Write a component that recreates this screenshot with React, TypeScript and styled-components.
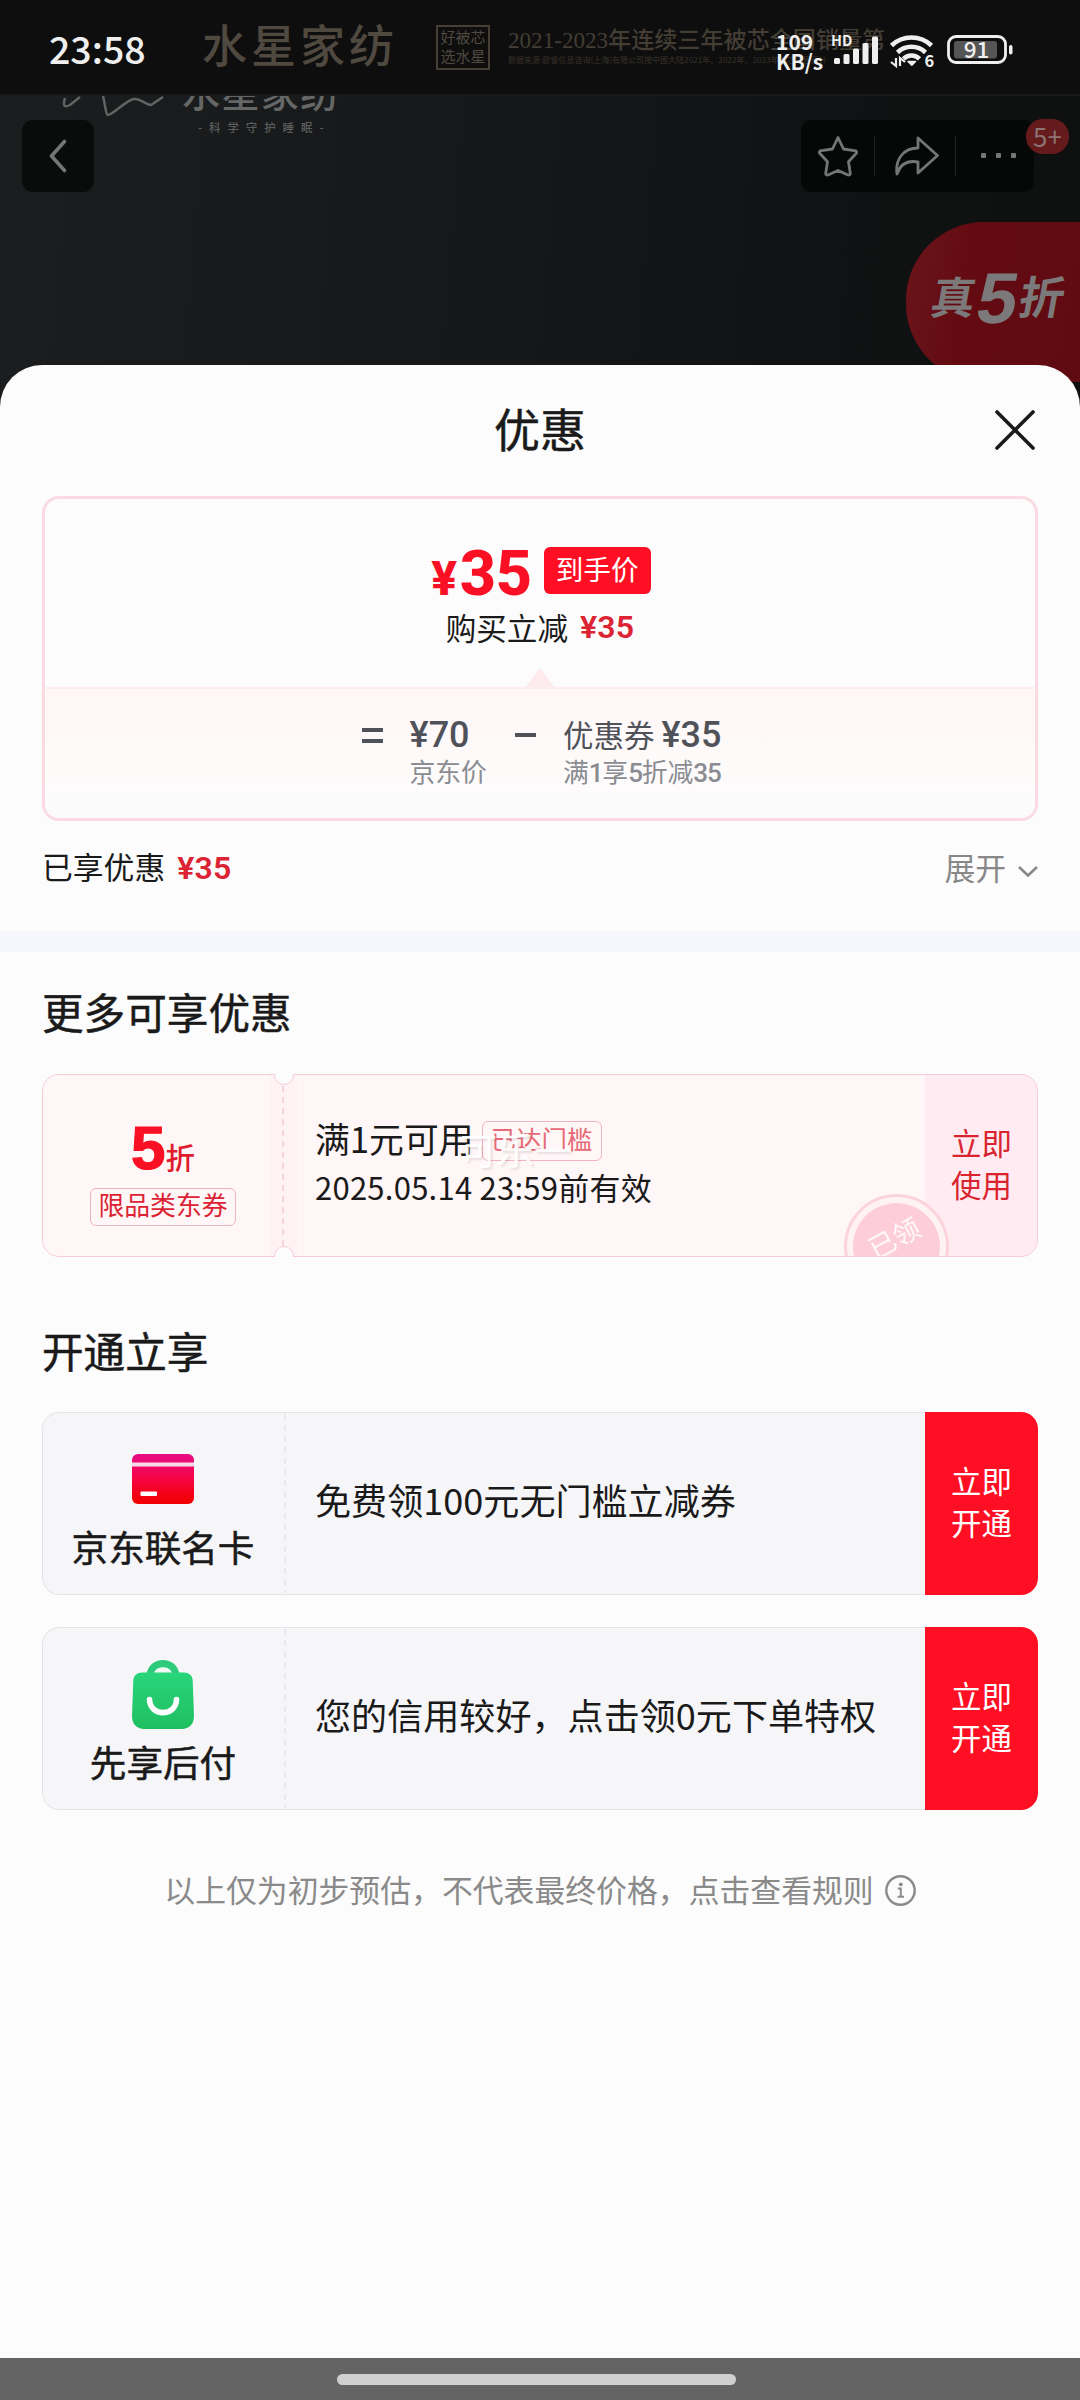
import React from "react";
import styled, { createGlobalStyle } from "styled-components";

const cjk = '"Noto Sans CJK SC", sans-serif';
const latin = 'Roboto, "Noto Sans CJK SC", sans-serif';

const GlobalStyle = createGlobalStyle`
  * { box-sizing: border-box; }
  body { margin: 0; background: #646464; font-family: ${cjk}; }
  svg { display: block; flex: none; }
`;

const Screen = styled.div`
  width: 1080px;
  height: 2400px;
  display: flex;
  flex-direction: column;
  overflow: hidden;
  white-space: nowrap;
`;

/* ---------- status bar ---------- */

const StatusBar = styled.div`
  position: relative;
  flex: none;
  height: 94px;
  background: #0e0e0e;
`;

const ShopBanner = styled.div`
  height: 94px;
  padding-left: 202px;
  display: flex;
  align-items: flex-start;
  color: #504940;
`;

const BannerName = styled.div`
  width: 234px;
  margin-top: 13px;
  font-size: 45px;
  line-height: 62px;
  font-weight: 500;
  letter-spacing: 4px;
`;

const BannerSeal = styled.div`
  width: 54px;
  height: 45px;
  margin: 25px 18px 0 0;
  border: 2px solid #453f36;
  font-size: 15px;
  line-height: 19px;
  text-align: center;
`;

const BannerClaim = styled.div`
  margin-top: 26px;
  color: #433d34;
  font-size: 23.1px;
  line-height: 28px;
  font-weight: 500;
  font-family: "Liberation Serif", ${cjk};
`;

const BannerSource = styled.div`
  color: #302c26;
  font-size: 8px;
  line-height: 12px;
  font-family: ${cjk};
`;

const SystemLayer = styled.div`
  position: absolute;
  inset: 0;
  display: flex;
  align-items: flex-start;
  color: #efefef;
`;

const Clock = styled.div`
  width: 728px;
  padding-left: 49px;
  margin-top: 21px;
  font-size: 37.5px;
  line-height: 54px;
  font-weight: 500;
`;

const NetSpeed = styled.div`
  width: 55px;
  margin: 31px 0 0 48px;
  font-size: 21px;
  line-height: 20px;
  font-weight: 700;
`;

const SystemIcons = styled.svg`
  width: 190px;
  height: 44px;
  margin-top: 30px;
  font-family: ${cjk};
`;

/* ---------- dimmed product page ---------- */

const Hero = styled.div`
  position: relative;
  flex: none;
  height: 315px;
  overflow: hidden;
  background: linear-gradient(95deg, #1b1d1e 0%, #161819 40%, #101213 75%, #0e1010 100%);
  border-top: 2px solid #191b1b;
`;

const HeroBrand = styled.div`
  position: absolute;
  left: 182px;
  top: -31px;
  color: #656666;
  font-size: 38px;
  line-height: 52px;
  font-weight: 500;
  letter-spacing: 1.4px;
`;

const HeroTagline = styled.div`
  position: absolute;
  left: 198px;
  top: 22px;
  color: #5c5d5d;
  font-size: 11.5px;
  line-height: 18px;
  font-weight: 500;
  letter-spacing: 6.9px;
`;

const HeroMark = styled.svg`
  position: absolute;
  left: 60px;
  top: -2px;
`;

const NavRow = styled.div`
  display: flex;
  justify-content: space-between;
  padding: 24px 46px 0 22px;
`;

const NavButton = styled.div`
  width: 72px;
  height: 72px;
  border-radius: 11px;
  background: #0a0b0b;
  display: flex;
  align-items: center;
  justify-content: center;
`;

const NavGroup = styled.div`
  position: relative;
  width: 233px;
  height: 72px;
  border-radius: 11px;
  background: #060707;
  display: flex;
  align-items: center;
`;

const NavCell = styled.div<{ $w: number; $line?: boolean; $shift?: number }>`
  width: ${(p) => p.$w}px;
  height: 40px;
  padding-left: ${(p) => p.$shift ?? 0}px;
  display: flex;
  align-items: center;
  justify-content: center;
  border-right: ${(p) => (p.$line ? "1px solid #222424" : "0")};
`;

const CountBadge = styled.div`
  position: absolute;
  left: 225px;
  top: -1px;
  width: 43px;
  height: 35px;
  border-radius: 17px;
  background: #651a1b;
  color: #8c7474;
  font-size: 26px;
  line-height: 33px;
  text-align: center;
`;

const DiscountPill = styled.div`
  position: absolute;
  left: 906px;
  top: 126px;
  width: 174px;
  height: 160px;
  border-radius: 78px 0 0 78px;
  background: linear-gradient(100deg, #6a151b 0%, #640b12 35%, #600a11 100%);
  color: #7c797a;
  display: flex;
  align-items: center;
  gap: 2px;
  padding: 0 0 8px 26px;
  font-weight: 900;
`;

const PillText = styled.span<{ $size: number }>`
  font-family: ${(p) => (p.$size > 50 ? '"Liberation Sans", sans-serif' : cjk)};
  font-size: ${(p) => p.$size}px;
  line-height: 80px;
  font-weight: ${(p) => (p.$size > 50 ? 900 : 700)};
  transform: skewX(-10deg);
  margin-top: ${(p) => (p.$size > 50 ? -1 : -6)}px;
`;

/* ---------- sheet ---------- */

const Sheet = styled.div`
  position: relative;
  flex: none;
  height: 1993px;
  margin-top: -44px;
  border-radius: 42px 42px 0 0;
  background: #fcfcfc;
  color: #1a1a1a;
  display: flex;
  flex-direction: column;
`;

const SheetHeader = styled.div`
  height: 124px;
  margin-bottom: 7px;
  padding: 0 42px;
  display: grid;
  grid-template-columns: 1fr auto 1fr;
  align-items: center;
`;

const SheetTitle = styled.div`
  grid-column: 2;
  font-size: 46px;
  line-height: 64px;
  -webkit-text-stroke: 0.5px #1a1a1a;
`;

const CloseIcon = styled.svg`
  justify-self: end;
  margin-top: 7px;
`;

const PriceCard = styled.div`
  height: 325px;
  margin: 0 42px;
  border: 3px solid #fbdae2;
  border-radius: 17px;
  overflow: hidden;
`;

const FinalPrice = styled.div`
  position: relative;
  height: 188px;
  padding-top: 48px;
`;

const PriceRow = styled.div`
  display: flex;
  justify-content: center;
  gap: 12px;
  height: 47px;
  margin-bottom: 15px;
  padding-left: 2px;
`;

const BigPrice = styled.div`
  color: #fa1024;
  font-family: ${latin};
  font-size: 63px;
  line-height: 54px;
  font-weight: 800;
  letter-spacing: -0.4px;
`;

const Yen = styled.span`
  font-size: 48px;
  margin-right: 3px;
`;

const FinalTag = styled.div`
  width: 107px;
  height: 47px;
  border-radius: 6px;
  background: #ff0f23;
  color: #fff;
  font-size: 27.6px;
  line-height: 43px;
  text-align: center;
`;

const SavingRow = styled.div`
  display: flex;
  justify-content: center;
  font-size: 30.6px;
  line-height: 37px;
`;

const RedAmount = styled.span`
  margin-left: 12px;
  color: #dc2333;
  font-family: ${latin};
  font-size: 32px;
  font-weight: 600;
  letter-spacing: 0.2px;
`;

const Pointer = styled.svg`
  position: absolute;
  left: 481px;
  bottom: 0;
`;

const Formula = styled.div`
  height: 131px;
  padding: 24px 0 0 3px;
  border-top: 2px solid #fdedf0;
  background: linear-gradient(#fff6f7 0%, #fefafa 50%, #fcfcfc 100%);
  display: flex;
  justify-content: center;
  color: #50525a;
`;

const Sign = styled.div<{ $lead?: boolean }>`
  width: 21px;
  height: 44px;
  margin: 0 27px 0 ${(p) => (p.$lead ? 0 : 28)}px;
  display: flex;
  flex-direction: column;
  justify-content: center;
  gap: 7px;
`;

const SignBar = styled.div`
  height: 4px;
  background: #50525a;
`;

const Term = styled.div`
  display: flex;
  flex-direction: column;
`;

const TermValue = styled.div`
  height: 44px;
  display: flex;
  align-items: baseline;
  font-size: 30.5px;
  line-height: 40px;
`;

const TermAmount = styled.span<{ $gap?: number }>`
  margin-left: ${(p) => p.$gap ?? 0}px;
  font-family: ${latin};
  font-size: 36px;
  line-height: 44px;
  font-weight: 500;
`;

const TermNote = styled.div`
  height: 34px;
  color: #8a8c92;
  font-size: 25.8px;
  line-height: 28px;
`;

const NoteNumber = styled.span`
  font-family: ${latin};
  font-size: 26px;
  font-weight: 500;
  letter-spacing: -1.2px;
`;

const SavedRow = styled.div`
  height: 50px;
  margin: 21px 42px 39px;
  display: flex;
  align-items: center;
  justify-content: space-between;
  font-size: 30.8px;
  line-height: 50px;
`;

const Expand = styled.div`
  display: flex;
  align-items: center;
  gap: 12px;
  color: #888;
`;

const Chevron = styled.svg`
  margin-top: 9px;
`;

const Band = styled.div`
  height: 21px;
  background: #f6f7fd;
`;

const SectionTitle = styled.div<{ $top: number; $bottom: number }>`
  margin: ${(p) => p.$top}px 42px ${(p) => p.$bottom}px;
  font-size: 41.6px;
  line-height: 60px;
  -webkit-text-stroke: 0.5px #1a1a1a;
`;

const Ticket = styled.div<{ $pink?: boolean }>`
  position: relative;
  flex: none;
  height: 183px;
  margin: 0 42px ${(p) => (p.$pink ? 0 : 32)}px;
  border-radius: 17px;
  overflow: hidden;
  background: ${(p) => (p.$pink ? "#fff6f7" : "#f6f6f9")};
  display: grid;
  grid-template-columns: 242px 1fr 113px;
`;

const TicketOutline = styled.div<{ $color: string; $right?: number }>`
  position: absolute;
  inset: 0 ${(p) => p.$right ?? 0}px 0 0;
  border: 1.5px solid ${(p) => p.$color};
  border-right-width: ${(p) => (p.$right ? 0 : 1.5)}px;
  border-radius: ${(p) => (p.$right ? "17px 0 0 17px" : "17px")};
`;

const Seam = styled.div`
  position: absolute;
  left: 227px;
  top: 1px;
  bottom: 1px;
  width: 28px;
  background: #fff2f4;
  display: flex;
  justify-content: center;
`;

const Dash = styled.div<{ $color: string }>`
  width: 1.5px;
  height: 100%;
  background: repeating-linear-gradient(${(p) => p.$color} 0 6px, transparent 6px 11px);
`;

const PlainSeam = styled.div`
  position: absolute;
  left: 242px;
  top: 2px;
  bottom: 2px;
`;

const Notch = styled.div<{ $bottom?: boolean }>`
  position: absolute;
  left: 232px;
  ${(p) => (p.$bottom ? "bottom" : "top")}: -9px;
  width: 20px;
  height: 20px;
  border-radius: 50%;
  border: 1.5px solid #f5ccd6;
  background: #fcfcfc;
`;

const Stub = styled.div<{ $top: number }>`
  display: flex;
  flex-direction: column;
  align-items: center;
  padding-top: ${(p) => p.$top}px;
`;

const Discount = styled.div`
  height: 60px;
  margin-bottom: 10px;
  color: #fa1024;
  font-family: "Liberation Sans", sans-serif;
  font-size: 62px;
  line-height: 60px;
  font-weight: 700;
  -webkit-text-stroke: 1.2px #fa1024;
`;

const DiscountUnit = styled.span`
  font-family: ${cjk};
  font-size: 29.5px;
  line-height: 1;
  font-weight: 500;
  color: #e01c2e;
  -webkit-text-stroke: 0;
`;

const LimitTag = styled.div`
  width: 146px;
  height: 38px;
  border: 1.5px solid #f2b4c1;
  border-radius: 6px;
  color: #dc2333;
  font-size: 25.8px;
  line-height: 30px;
  text-align: center;
`;

const StubLabel = styled.div`
  position: absolute;
  bottom: 20px;
  font-size: 36.6px;
  line-height: 56px;
  -webkit-text-stroke: 0.5px #1a1a1a;
`;

const TicketBody = styled.div`
  display: flex;
  flex-direction: column;
  justify-content: center;
  padding-left: 31px;
`;

const OfferText = styled.div`
  margin-top: -9px;
  font-size: 36.1px;
  line-height: 54px;
`;

const Condition = styled.div`
  display: flex;
  align-items: center;
  gap: 8px;
  height: 48px;
  margin-top: -2px;
  font-size: 34.8px;
  line-height: 40px;
`;

const ConditionText = styled.span`
  margin-top: -6px;
`;

const MetTag = styled.div`
  width: 120px;
  height: 40px;
  border: 1.5px solid #f2b4c1;
  border-radius: 6px;
  color: #e66a76;
  font-size: 25.4px;
  line-height: 33px;
  text-align: center;
`;

const Validity = styled.div`
  height: 48px;
  font-size: 31px;
  line-height: 44px;
  letter-spacing: 0.25px;
`;

const TicketAction = styled.div<{ $pink?: boolean }>`
  display: flex;
  align-items: center;
  justify-content: center;
  padding-bottom: 6px;
  background: ${(p) => (p.$pink ? "#ffebf1" : "#ff0f23")};
  color: ${(p) => (p.$pink ? "#d9242f" : "#fff")};
  font-size: 30.4px;
  line-height: 42px;
`;

const Stamp = styled.div`
  position: absolute;
  left: 802px;
  top: 120px;
  width: 105px;
  height: 105px;
  border-radius: 50%;
  border: 3px solid #fbd3dc;
  padding: 6px;
  background: #fff2f5;
`;

const StampFace = styled.div`
  width: 87px;
  height: 87px;
  border-radius: 50%;
  background: #fdcdd9;
  color: #fff8fa;
  font-size: 27px;
  line-height: 68px;
  text-align: center;
  padding-left: 4px;
  transform: rotate(-28deg);
`;

const UserMark = styled.div`
  position: absolute;
  left: 418px;
  top: 49px;
  color: rgba(255, 255, 255, 0.95);
  font-size: 37px;
  line-height: 52px;
  text-shadow: 2px 2px 2px rgba(120, 100, 110, 0.16);
`;

const Footnote = styled.div`
  display: flex;
  align-items: center;
  justify-content: center;
  gap: 11px;
  height: 44px;
  margin-top: 26px;
  color: #8a8a8a;
  font-size: 30.85px;
  line-height: 40px;
`;

const FootnoteText = styled.span`
  margin-top: -3px;
`;

const HomeBar = styled.div`
  flex: 1;
  background: #646464;
  display: flex;
  justify-content: center;
  align-items: flex-start;
  padding: 16px 7px 0 0;
`;

const HomePill = styled.div`
  width: 399px;
  height: 11px;
  border-radius: 6px;
  background: #d0d0d0;
`;

const bars = [
  [834, 58],
  [843.5, 54],
  [853, 48.5],
  [862.5, 43],
  [872, 36.5],
];

function StatusIcons() {
  return (
    <SystemIcons viewBox="831 30 190 44" fill="#efefef">
      <text x="831" y="46" fontSize="14.5" fontWeight="700">HD</text>
      {bars.map(([x, y]) => (
        <rect key={x} x={x} y={y} width="6" height={64 - y} rx="1.5" />
      ))}
      <g fill="none" stroke="#efefef" strokeWidth="4.6">
        <path d="M891.5 45.5a29 29 0 0 1 40 0" />
        <path d="M897.5 52.5a20 20 0 0 1 28 0" />
        <path d="M903.5 58.8a11.500 11.500 0 0 1 16 0" />
      </g>
      <path d="M908 61.500h7.500l-3.700 3.800z" stroke="#efefef" strokeWidth="1.500" strokeLinejoin="round" />
      <path d="M896 58v8l-5-4M900 66v-8l5 4" fill="none" stroke="#efefef" strokeWidth="2.200" />
      <text x="924.500" y="66.500" fontSize="16.5" fontWeight="700">6</text>
      <rect x="948.500" y="36.500" width="57" height="26" rx="7.500" fill="none" stroke="#efefef" strokeWidth="2.800" />
      <rect x="954" y="41" width="43" height="17.500" rx="3" fill="#555" />
      <rect x="1009" y="45" width="3.500" height="9.500" rx="1.700" />
      <text x="976.500" y="58" fontSize="22.5" fontWeight="500" textAnchor="middle">91</text>
    </SystemIcons>
  );
}

function CardIcon() {
  return (
    <svg width="62" height="50" viewBox="0 0 62 50">
      <defs>
        <linearGradient id="cardFill" x1="0" y1="0" x2="0" y2="1">
          <stop offset="0" stopColor="#e60c86" />
          <stop offset="0.45" stopColor="#f5054a" />
          <stop offset="0.85" stopColor="#f20010" />
          <stop offset="1" stopColor="#f20000" />
        </linearGradient>
      </defs>
      <rect width="62" height="50" rx="6" fill="url(#cardFill)" />
      <rect y="8.500" width="62" height="4" fill="#fbd9ea" />
      <rect x="8.500" y="37.500" width="16.500" height="4.500" rx="1" fill="#fff" />
    </svg>
  );
}

function BagIcon() {
  return (
    <svg width="62" height="69" viewBox="0 0 62 69">
      <defs>
        <linearGradient id="bagFill" x1="0" y1="0" x2="0" y2="1">
          <stop offset="0" stopColor="#29d67b" />
          <stop offset="1" stopColor="#1fbf60" />
        </linearGradient>
      </defs>
      <path d="M14.500 14C16 5.500 22.500 0 31 0S46 5.500 47.500 14Z" fill="#2fcb7c" />
      <path d="M10 12.500h42c5 0 8.500 3 8.700 8L62 56c0 8-5 13-12 13H12C5 69 0 64 0 56l1.300-35.500C1.500 15.500 5 12.500 10 12.500z" fill="url(#bagFill)" />
      <path d="M22 12.500C23.500 9 27 7.200 31 7.200s7.500 1.800 9 5.300z" fill="#f0faf4" />
      <path d="M17.500 39.500C18 57 44 57 44.500 39.500" fill="none" stroke="#fff" strokeWidth="5.600" strokeLinecap="round" />
    </svg>
  );
}

const offers = [
  { name: "京东联名卡", text: "免费领100元无门槛立减券", icon: <CardIcon />, top: 42 },
  { name: "先享后付", text: "您的信用较好，点击领0元下单特权", icon: <BagIcon />, top: 33 },
];

export default function App() {
  return (
    <Screen>
      <GlobalStyle />
      <StatusBar>
        <ShopBanner>
          <BannerName>水星家纺</BannerName>
          <BannerSeal>
            好被芯
            <br />
            选水星
          </BannerSeal>
          <BannerClaim>
            2021-2023年连续三年被芯全国销量第
            <BannerSource>数据来源:欧睿信息咨询(上海)有限公司按中国大陆2021年、2022年、2023年被芯零售额计</BannerSource>
          </BannerClaim>
        </ShopBanner>
        <SystemLayer>
          <Clock>23:58</Clock>
          <NetSpeed>
            109
            <br />
            KB/s
          </NetSpeed>
          <StatusIcons />
        </SystemLayer>
      </StatusBar>

      <Hero>
        <HeroMark width="110" height="24" viewBox="0 0 110 24" fill="none" stroke="#626464" strokeWidth="2.500">
          <path d="M5 4C2 14 6 13 10 11L20 3M43 2C45 10 46 21 48 21C54 20 66 6 74 5C80 4 86 11 91 11L103 3" />
        </HeroMark>
        <HeroBrand>水星家纺</HeroBrand>
        <HeroTagline>-科学守护睡眠-</HeroTagline>
        <NavRow>
          <NavButton>
            <svg width="18" height="34" viewBox="0 0 18 34" fill="none" stroke="#747575" strokeWidth="3.600" strokeLinecap="round" strokeLinejoin="round">
              <path d="M15.500 2.500L2.500 17L15.500 31.500" />
            </svg>
          </NavButton>
          <NavGroup>
            <NavCell $w={74} $line>
              <svg width="42" height="42" viewBox="0 0 42 42" fill="none" stroke="#747575" strokeWidth="2.800" strokeLinejoin="round">
                <path d="M21 2.500L26.500 14L39 15.800Q40 17 39.500 18L31.500 26.800L33.300 38.500Q33 40.500 31 40L21 35.500L11 40Q9 40.500 8.700 38.500L10.500 26.800L2.500 18Q2 17 3 15.800L15.500 14Z" />
              </svg>
            </NavCell>
            <NavCell $w={81} $line $shift={4}>
              <svg width="44" height="40" viewBox="0 0 44 40" fill="none" stroke="#747575" strokeWidth="2.800" strokeLinejoin="round">
                <path d="M23 2L42.500 19.500L23 37V26C12 24 5 29 2 38C0 24 8 12 23 12Z" />
              </svg>
            </NavCell>
            <NavCell $w={78} $shift={8}>
              <svg width="36" height="6" viewBox="0 0 36 6" fill="#747575">
                <rect width="5" height="5" x="0" rx="1" />
                <rect width="5" height="5" x="15" rx="1" />
                <rect width="5" height="5" x="30" rx="1" />
              </svg>
            </NavCell>
            <CountBadge>5+</CountBadge>
          </NavGroup>
        </NavRow>
        <DiscountPill>
          <PillText $size={44}>真</PillText>
          <PillText $size={72}>5</PillText>
          <PillText $size={45}>折</PillText>
        </DiscountPill>
      </Hero>

      <Sheet>
        <SheetHeader>
          <SheetTitle>优惠</SheetTitle>
          <CloseIcon width="44" height="44" viewBox="0 0 44 44" stroke="#1a1a1a" strokeWidth="3.600" strokeLinecap="round">
            <path d="M3 3L39 39M39 3L3 39" />
          </CloseIcon>
        </SheetHeader>

        <PriceCard>
          <FinalPrice>
            <PriceRow>
              <BigPrice>
                <Yen>¥</Yen>35
              </BigPrice>
              <FinalTag>到手价</FinalTag>
            </PriceRow>
            <SavingRow>
              购买立减<RedAmount>¥35</RedAmount>
            </SavingRow>
            <Pointer width="28" height="19" viewBox="0 0 28 19">
              <path d="M0 19L12 2Q14 0 16 2L28 19Z" fill="#fdeaef" />
            </Pointer>
          </FinalPrice>
          <Formula>
            <Sign $lead>
              <SignBar />
              <SignBar />
            </Sign>
            <Term>
              <TermValue>
                <TermAmount>¥70</TermAmount>
              </TermValue>
              <TermNote>京东价</TermNote>
            </Term>
            <Sign>
              <SignBar />
            </Sign>
            <Term>
              <TermValue>
                优惠券<TermAmount $gap={7}>¥35</TermAmount>
              </TermValue>
              <TermNote>
                满<NoteNumber>1</NoteNumber>享<NoteNumber>5</NoteNumber>折减<NoteNumber>35</NoteNumber>
              </TermNote>
            </Term>
          </Formula>
        </PriceCard>

        <SavedRow>
          <div>
            已享优惠<RedAmount>¥35</RedAmount>
          </div>
          <Expand>
            展开
            <Chevron width="20" height="13" viewBox="0 0 20 13" fill="none" stroke="#888" strokeWidth="2.600">
              <path d="M1 2L10 10.500L19 2" />
            </Chevron>
          </Expand>
        </SavedRow>

        <Band />

        <SectionTitle $top={29} $bottom={33}>更多可享优惠</SectionTitle>
        <Ticket $pink>
          <Stub $top={44}>
            <Discount>
              5<DiscountUnit>折</DiscountUnit>
            </Discount>
            <LimitTag>限品类东券</LimitTag>
          </Stub>
          <TicketBody>
            <Condition>
              <ConditionText>满1元可用</ConditionText>
              <MetTag>已达门槛</MetTag>
            </Condition>
            <Validity>2025.05.14 23:59前有效</Validity>
          </TicketBody>
          <TicketAction $pink>
            立即
            <br />
            使用
          </TicketAction>
          <Stamp>
            <StampFace>已领</StampFace>
          </Stamp>
          <Seam>
            <Dash $color="#f6d3da" />
          </Seam>
          <TicketOutline $color="#f5ccd6" />
          <Notch />
          <Notch $bottom />
          <UserMark>可乐一</UserMark>
        </Ticket>

        <SectionTitle $top={63} $bottom={32}>开通立享</SectionTitle>
        {offers.map((o) => (
          <Ticket key={o.name}>
            <Stub $top={o.top}>
              {o.icon}
              <StubLabel>{o.name}</StubLabel>
            </Stub>
            <TicketBody>
              <OfferText>{o.text}</OfferText>
            </TicketBody>
            <TicketAction>
              立即
              <br />
              开通
            </TicketAction>
            <PlainSeam>
              <Dash $color="#e9e9ed" />
            </PlainSeam>
            <TicketOutline $color="#e4e4e8" $right={113} />
          </Ticket>
        ))}

        <Footnote>
          <FootnoteText>以上仅为初步预估，不代表最终价格，点击查看规则</FootnoteText>
          <svg width="31" height="31" viewBox="0 0 31 31" fill="none" stroke="#8a8a8a" strokeWidth="2.400">
            <circle cx="15.500" cy="15.500" r="14.200" />
            <circle cx="15.800" cy="9.300" r="1.900" fill="#8a8a8a" stroke="none" />
            <path d="M12.800 13.500h3v8M12.500 21.800h6.500" strokeWidth="2" />
          </svg>
        </Footnote>
      </Sheet>

      <HomeBar>
        <HomePill />
      </HomeBar>
    </Screen>
  );
}
